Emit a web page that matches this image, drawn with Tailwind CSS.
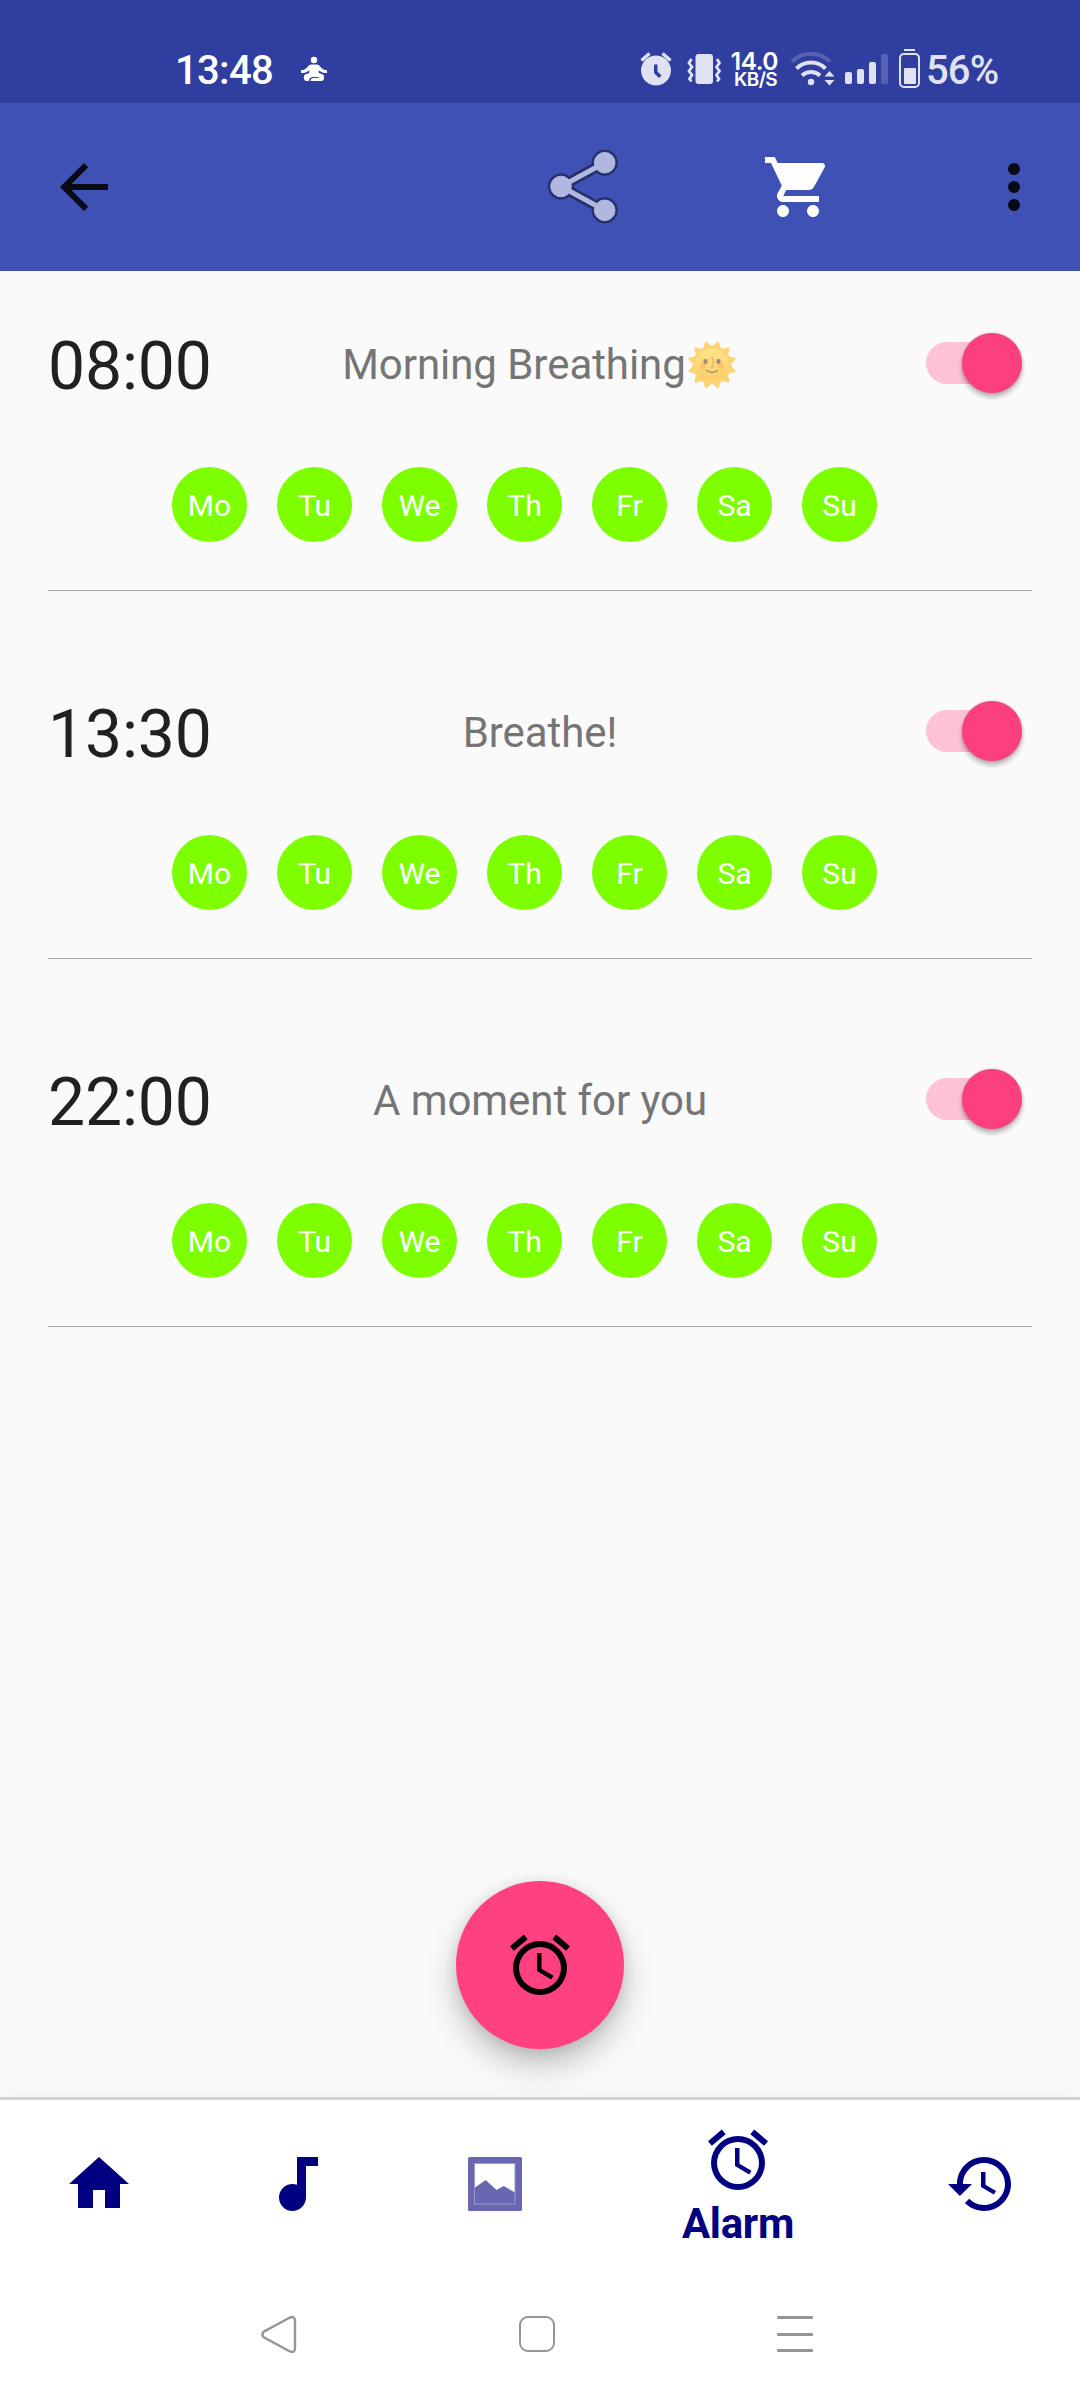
<!DOCTYPE html>
<html lang="en">
<head>
    <meta charset="UTF-8">
    <meta name="viewport" content="width=device-width, initial-scale=1.0">
    <script src="https://cdn.jsdelivr.net/npm/@tailwindcss/browser@4"></script>
    <title>Alarms</title>
</head>
<body class="font-['Roboto',sans-serif]">
    <div class="flex flex-col w-[1080px] h-[2400px] bg-[#fafafa] overflow-hidden">

        <!-- status bar -->
        <div class="flex h-[103px] bg-[#303f9f] pt-[46px] pl-[175px] pr-[82px] shrink-0">
            <p class="text-[40px] leading-[50px] font-medium text-white w-[124px] tracking-[-0.7px]">13:48</p>
            <svg class="w-[30px] h-[48px]" viewBox="0 0 30 48" fill="#fff">
                <circle cx="15" cy="14" r="3.2"/>
                <path d="M12.5 18.500h5c2 0 3 1 4 2.500 1.500 2 3.500 3 6.500 3.300v2.700c-3.500 0-6-.800-8.200-2.800v2.800l4 1.500c2 .800 1.700 6.500-1 6.500H11.500c0-2 1.500-3 3-3h5v-1h-5c-3 0-4.500 1.500-4.500 4H7.200c-2.700 0-3-5.700-1-6.500l4-1.500v-2.800C8 26.200 5.500 27 2 27v-2.700c3-.300 5-1.300 6.500-3.300 1-1.500 2-2.500 4-2.500z"/>
            </svg>
            <div class="flex ml-auto">
                <!-- alarm -->
                <svg class="w-[34px] h-[48px]" viewBox="0 0 34 48" fill="#dfe2f2">
                    <path fill-rule="evenodd" d="M17 9.500a15 15 0 1 0 .01 0zM15 18.500h3.500v7l4 4-2.500 2.500-5-5z"/>
                    <path d="M2.500 14.500l8-7M31.500 14.500l-8-7" stroke="#dfe2f2" stroke-width="3.500"/>
                </svg>
                <!-- vibrate -->
                <svg class="w-[34px] h-[48px] ml-[14px] mr-px" viewBox="0 0 34 48" fill="none" stroke="#dfe2f2" stroke-width="2.800">
                    <rect x="8.500" y="8" width="17.500" height="30" rx="3" fill="#dfe2f2" stroke="none"/>
                    <path d="M4.500 13L2 17l3 4-3 4 3 4-2.500 4 2 2.500M30 13l2.500 4-3 4 3 4-3 4 2.500 4-2 2.500"/>
                </svg>
                <div class="flex flex-col items-end w-[56px] pt-[4px] text-white">
                    <p class="text-[24.500px] leading-[22px] font-['Inter',sans-serif] font-semibold tracking-[-0.5px]">14.0</p>
                    <p class="text-[19px] leading-[16px] font-['Inter',sans-serif] font-semibold tracking-[-0.6px] pr-[1px]">KB/S</p>
                </div>
                <!-- wifi -->
                <svg class="w-[46px] h-[48px] ml-[12px]" viewBox="0 0 46 48" fill="none" stroke="#dfe2f2" stroke-width="4">
                    <path d="M2 15.500a27 27 0 0 1 38 0" stroke="#5662b1"/>
                    <path d="M6.500 22.500a20.500 20.500 0 0 1 29 0M12 29.500a13.500 13.500 0 0 1 18 0"/>
                    <circle cx="21" cy="36" r="3.200" fill="#dfe2f2" stroke="none"/>
                    <path d="M39.500 25l5 5.500h-10zM39.500 39.500l5-5.500h-10z" fill="#dfe2f2" stroke="none"/>
                </svg>
                <div class="flex items-end h-[38px] gap-[5px] ml-[9px]">
                    <div class="w-[7px] h-[12px] rounded-[2px] bg-[#dfe2f2]"></div>
                    <div class="w-[7px] h-[15px] rounded-[2px] bg-[#dfe2f2]"></div>
                    <div class="w-[7px] h-[22px] rounded-[2px] bg-[#dfe2f2]"></div>
                    <div class="w-[7px] h-[30px] rounded-[2px] bg-[#5662b1]"></div>
                </div>
                <div class="flex flex-col items-center w-[21px] ml-[11px] pt-[3px]">
                    <div class="w-[11px] h-[2px] bg-[#dfe2f2] mb-[2px]"></div>
                    <div class="flex items-end w-[21px] h-[35px] border-2 border-[#dfe2f2] rounded-[5px] p-[2.500px]">
                        <div class="w-full h-[16px] bg-[#dfe2f2] rounded-[1px]"></div>
                    </div>
                </div>
                <p class="text-[40px] leading-[50px] text-[#dfe2f2] font-medium ml-[6px] w-[72px] whitespace-nowrap tracking-[-0.9px]">56%</p>
            </div>
        </div>

        <!-- toolbar -->
        <div class="flex items-center h-[168px] bg-[#3f51b5] pl-[48px] pr-[30px] shrink-0">
            <svg class="size-[72px]" viewBox="0 0 24 24" fill="#080a15"><path d="M20 11H7.830l5.590-5.590L12 4l-8 8 8 8 1.410-1.410L7.830 13H20v-2z"/></svg>
            <svg class="size-[84px] ml-auto" viewBox="0 0 84 84">
                <g fill="#26316b" stroke="#26316b">
                    <path d="M62.700 17.700L19 41.500l43.700 23.800" fill="none" stroke-width="10.500"/>
                    <circle cx="62.700" cy="17.700" r="12.700"/><circle cx="19" cy="41.500" r="12.700"/><circle cx="62.700" cy="65.300" r="12.700"/>
                </g>
                <g fill="#b1b7e0" stroke="#b1b7e0">
                    <path d="M62.700 17.700L19 41.500l43.700 23.800" fill="none" stroke-width="5"/>
                    <circle cx="62.700" cy="17.700" r="10.300"/><circle cx="19" cy="41.500" r="10.300"/><circle cx="62.700" cy="65.300" r="10.300"/>
                </g>
            </svg>
            <svg class="size-[72px] ml-[136px]" viewBox="0 0 24 24" fill="#fff"><path d="M7 18c-1.100 0-1.990.900-1.990 2S5.900 22 7 22s2-.900 2-2-.900-2-2-2zM1 2v2h2l3.600 7.590-1.350 2.450c-.160.280-.250.610-.250.960 0 1.100.900 2 2 2h12v-2H7.420c-.140 0-.250-.110-.250-.250l.030-.120.900-1.630h7.450c.750 0 1.410-.410 1.750-1.030l3.580-6.490A1 1 0 0 0 20 4H5.210l-.940-2H1zm16 16c-1.100 0-1.990.900-1.990 2s.890 2 1.990 2 2-.900 2-2-.900-2-2-2z"/></svg>
            <svg class="size-[72px] ml-[144px]" viewBox="0 0 24 24" fill="#080a15"><circle cx="12" cy="6" r="2"/><circle cx="12" cy="12" r="2"/><circle cx="12" cy="18" r="2"/></svg>
        </div>

        <!-- alarm list -->
        <div id="alarms" class="flex flex-col grow px-[48px]"></div>

        <!-- add alarm -->
        <div class="flex justify-center pb-[48px] shrink-0">
            <button class="flex justify-center items-center size-[168px] rounded-full bg-[#ff4081] shadow-[0_16px_32px_rgba(0,0,0,0.24),0_2px_14px_rgba(0,0,0,0.1)]">
                <svg class="size-[72px]" viewBox="0 0 24 24" fill="#000"><path d="M22 5.720l-4.600-3.860-1.290 1.530 4.600 3.860L22 5.720zM7.880 3.390L6.600 1.860 2 5.710l1.290 1.530 4.590-3.850zM12.500 8H11v6l4.750 2.850.750-1.230-4-2.370V8zM12 4a9 9 0 1 0 0 18 9 9 0 0 0 0-18zm0 16a7 7 0 1 1 0-14 7 7 0 0 1 0 14z"/></svg>
            </button>
        </div>

        <!-- bottom navigation -->
        <div class="flex h-[183px] border-t-3 border-[#d5d5d5] bg-white shrink-0 shadow-[0_0_16px_rgba(0,0,0,0.05)]">
            <div class="flex justify-center w-[198px] pt-[48px]">
                <svg class="size-[72px]" viewBox="0 0 24 24" fill="#000080"><path d="M10 20v-6h4v6h5v-8h3L12 3 2 12h3v8z"/></svg>
            </div>
            <div class="flex justify-center w-[198px] pt-[48px]">
                <svg class="size-[72px]" viewBox="0 0 24 24" fill="#000080"><path d="M12 3v9.280c-.470-.170-.970-.280-1.500-.280C8.010 12 6 14.010 6 16.500S8.010 21 10.500 21c2.310 0 4.200-1.750 4.450-4H15V6h4V3h-7z"/></svg>
            </div>
            <div class="flex justify-center w-[198px] pt-[48px]">
                <svg class="size-[72px]" viewBox="0 0 72 72">
                    <rect x="9" y="9" width="54" height="54" rx="1.500" fill="#6967b1"/>
                    <rect x="16" y="16" width="40" height="40" fill="#fff"/>
                    <path d="M16 39.500l10.700-7.500 10.800 10 7.200-4 11.300 6.500V56H16z" fill="#6967b1"/>
                    <rect x="15.500" y="15.500" width="40.500" height="40.500" fill="none" stroke="#9a99cd"/>
                </svg>
            </div>
            <div class="flex flex-col items-center w-[288px] pt-[24px]">
                <svg class="size-[72px]" viewBox="0 0 24 24" fill="#000080"><path d="M22 5.720l-4.600-3.860-1.290 1.530 4.600 3.860L22 5.720zM7.880 3.390L6.600 1.860 2 5.710l1.290 1.530 4.590-3.850zM12.500 8H11v6l4.750 2.850.750-1.230-4-2.370V8zM12 4a9 9 0 1 0 0 18 9 9 0 0 0 0-18zm0 16a7 7 0 1 1 0-14 7 7 0 0 1 0 14z"/></svg>
                <p class="text-[42px] leading-[50px] font-bold text-[#000080] mt-[3px] tracking-[-0.3px]">Alarm</p>
            </div>
            <div class="flex justify-center w-[198px] pt-[48px]">
                <svg class="size-[72px]" viewBox="0 0 24 24" fill="#000080"><path d="M13 3c-4.970 0-9 4.030-9 9H1l3.890 3.890.070.140L9 12H6c0-3.870 3.130-7 7-7s7 3.130 7 7-3.130 7-7 7c-1.930 0-3.680-.790-4.940-2.060l-1.420 1.420C8.270 19.990 10.510 21 13 21c4.970 0 9-4.030 9-9s-4.030-9-9-9zm-1 5v5l4.280 2.540.720-1.210-3.500-2.080V8H12z"/></svg>
            </div>
        </div>

        <!-- system navigation -->
        <div class="flex h-[120px] bg-white pl-[260px] pt-[35px] shrink-0">
            <svg class="w-[38px] h-[38px]" viewBox="0 0 38 38" fill="none" stroke="#959595" stroke-width="2.400"><path d="M3.800 16.600L29.500 2.800q5.200-2.300 5.500 2.500v28.400q-.300 4.800-5.500 2.500L3.800 22.400q-2.800-2.900 0-5.800z"/></svg>
            <div class="size-[36px] ml-[221px] mt-px border-[2.500px] border-[#959595] rounded-[9px]"></div>
            <div class="flex flex-col justify-between w-[36px] h-[36px] ml-[222px] mt-px">
                <div class="h-[3px] bg-[#959595] rounded-[1px]"></div>
                <div class="h-[3px] bg-[#959595] rounded-[1px]"></div>
                <div class="h-[3px] bg-[#959595] rounded-[1px]"></div>
            </div>
        </div>
    </div>

    <!-- one alarm row -->
    <template id="alarm-row">
        <div class="flex flex-col h-[368px] -mt-[48px] mb-[48px] pt-[48px] border-b border-[#a9a9a9] shrink-0">
            <div class="flex items-center h-[187px]">
                <p class="alarm-time w-[200px] pt-[5px] text-[66px] leading-[78px] tracking-[-0.15px] text-[#212121]"></p>
                <div class="flex grow justify-center items-center text-[42px] leading-[50px] tracking-[-0.05px] text-[#757575] pt-[1px]">
                    <span class="alarm-label whitespace-nowrap"></span>
                    <svg class="alarm-sun hidden w-[52px] h-[50px]" viewBox="0 0 52 50">
                        <defs>
                            <linearGradient id="sun" x1="0" y1="0" x2="0" y2="1"><stop offset="0" stop-color="#fde58a"/><stop offset="1" stop-color="#fdcb66"/></linearGradient>
                        </defs>
                        <path d="M44.500 25L50.100 31.500 42 34.250 43.700 42.700 35.250 41 32.500 49.100 26 43.500 19.500 49.100 16.750 41 8.300 42.700 10 34.250 1.900 31.500 7.500 25 1.900 18.500 10 15.750 8.300 7.300 16.750 9 19.500.9 26 6.500 32.500.9 35.250 9 43.700 7.300 42 15.750 50.100 18.500z" fill="#fdd474"/>
                        <circle cx="26" cy="25" r="16.500" fill="url(#sun)"/>
                        <circle cx="17" cy="25.500" r="3" fill="#fcb865" opacity=".7"/><circle cx="35" cy="25.500" r="3" fill="#fcb865" opacity=".7"/>
                        <ellipse cx="19.500" cy="21.500" rx="2.200" ry="2.400" fill="#a08a78"/><ellipse cx="32.500" cy="21.500" rx="2.200" ry="2.400" fill="#a08a78"/>
                        <path d="M25.500 18q3 1.500 1.800 4.500t-.800 5h-2" fill="none" stroke="#f5ad75" stroke-width="1.500"/>
                        <path d="M20.500 30.500q5.500 4 11 0" fill="none" stroke="#a08a78" stroke-width="1.500" stroke-linecap="round"/>
                    </svg>
                </div>
                <div class="flex justify-end w-[200px] pb-[4px] pr-[10px]">
                    <div class="relative flex items-center w-[96px] h-[60px]">
                        <div class="w-[88px] h-[42px] rounded-full bg-[#fdc2d6]"></div>
                        <div class="absolute right-0 top-0 size-[60px] rounded-full bg-[#fb3f7f] shadow-[0_4px_5px_rgba(0,0,0,0.28),0_0_3px_rgba(0,0,0,0.15)]"></div>
                    </div>
                </div>
            </div>
            <div class="alarm-days flex gap-[30px] pl-[124px] mt-[9px]"></div>
        </div>
    </template>
    <template id="day">
        <div class="flex justify-center items-center size-[75px] pt-[2px] rounded-full bg-[#7dff00] text-[30px] leading-[36px] text-white"></div>
    </template>

    <script>
        const alarms = [
            { time: "08:00", label: "Morning Breathing", sun: true },
            { time: "13:30", label: "Breathe!" },
            { time: "22:00", label: "A moment for you" },
        ];
        const days = ["Mo", "Tu", "We", "Th", "Fr", "Sa", "Su"];
        const list = document.getElementById("alarms");

        for (const alarm of alarms) {
            const row = document.getElementById("alarm-row").content.cloneNode(true);
            row.querySelector(".alarm-time").textContent = alarm.time;
            row.querySelector(".alarm-label").textContent = alarm.label;
            if (alarm.sun) {
                row.querySelector(".alarm-sun").classList.remove("hidden");
            }
            for (const day of days) {
                const chip = document.getElementById("day").content.cloneNode(true);
                chip.firstElementChild.textContent = day;
                row.querySelector(".alarm-days").append(chip);
            }
            list.append(row);
        }
    </script>
</body>
</html>
